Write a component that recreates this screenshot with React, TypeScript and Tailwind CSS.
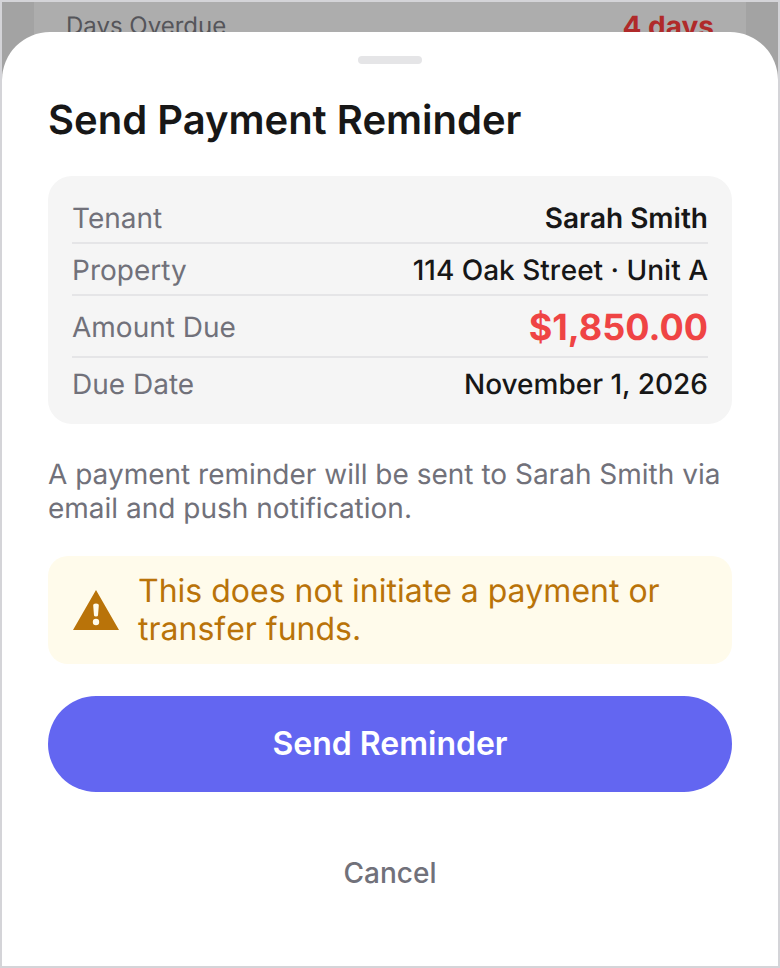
const details = [
  { label: "Tenant", value: "Sarah Smith", valueClass: "text-[28px] leading-9 font-semibold text-[#171717]", rowClass: "pb-1.5" },
  { label: "Property", value: "114 Oak Street · Unit A", valueClass: "text-[28px] leading-9 font-medium text-[#171717] [font-kerning:none]", rowClass: "pt-2 pb-1.5" },
  { label: "Amount Due", value: "$1,850.00", valueClass: "text-[36px] leading-[46px] font-bold text-[#ef4444]", rowClass: "pt-2 pb-1.5" },
  { label: "Due Date", value: "November 1, 2026", valueClass: "text-[28px] leading-9 font-medium text-[#171717]", rowClass: "pt-2" },
];

function WarningIcon() {
  return (
    <svg viewBox="0 0 46 40" className="h-10 w-[46px] shrink-0 fill-[#b97309]">
      <path
        fillRule="evenodd"
        d="M23 0 46 40H0ZM20.2 15.6 21 25.4Q21.2 26.4 23 26.4T25 25.4L25.8 15.6Q25.9 13.6 23 13.6T20.2 15.6ZM23 28.8A3.2 3.2 0 1 0 23 35.2 3.2 3.2 0 1 0 23 28.8Z"
      />
    </svg>
  );
}

export default function App() {
  return (
    <div className="relative h-[968px] w-[780px] overflow-hidden border-2 border-[#d4d4d8] bg-[#a3a3a3] font-['Inter',sans-serif] [text-rendering:geometricPrecision]">
      {/* page behind the sheet */}
      <div className="mx-8 h-full bg-[#adadad] px-8 pt-1.5">
        <div className="flex items-center justify-between">
          <span className="text-[24px] leading-9 text-[#55555a]">Days Overdue</span>
          <span className="text-[28px] leading-9 font-bold text-[#b02a2a]">4 days</span>
        </div>
      </div>

      <div className="absolute inset-x-0 bottom-0 top-[30px] flex flex-col rounded-t-[48px] bg-white px-[46px]">
        <div className="mx-auto mt-6 h-2 w-16 rounded-full bg-[#e5e5e7]" />
        <h2 className="mt-7 text-[40px] leading-[56px] font-semibold text-[#171717]">Send Payment Reminder</h2>

        <div className="mt-7 rounded-3xl bg-[#f5f5f5] px-6 pt-6 pb-[22px]">
          {details.map((row, i) => (
            <div
              key={row.label}
              className={`flex items-center justify-between ${row.rowClass} ${i < details.length - 1 ? "border-b-2 border-[#e5e5e7]" : ""}`}
            >
              <span className="text-[28px] leading-9 text-[#71717a]">{row.label}</span>
              <span className={row.valueClass}>{row.value}</span>
            </div>
          ))}
        </div>

        <p className="mt-[33px] text-[28px] leading-[34px] text-[#71717a]">
          A payment reminder will be sent to Sarah Smith via email and push notification.
        </p>

        <div className="mt-[31px] flex items-center gap-[19px] rounded-[20px] bg-[#fffbeb] py-4 pr-6 pl-[25px]">
          <WarningIcon />
          <span className="text-[32px] leading-[38px] text-[#b97309] [font-kerning:none]">
            This does not initiate a payment or transfer funds.
          </span>
        </div>

        <button className="mt-8 h-24 rounded-full bg-[#6366f1] text-[32px] font-semibold text-white">Send Reminder</button>
        <button className="mt-9 h-[90px] text-[28px] font-medium text-[#71717a]">Cancel</button>
      </div>
    </div>
  );
}
